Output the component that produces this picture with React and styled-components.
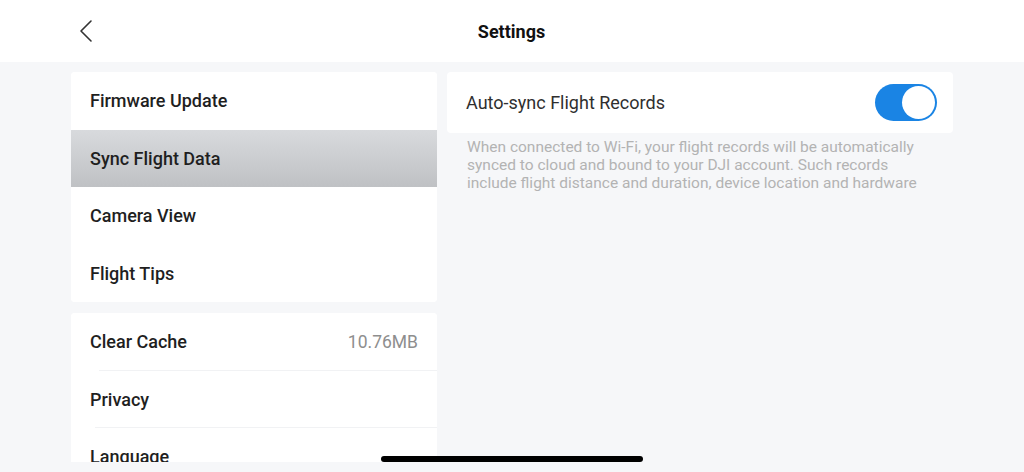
import React, { useState } from "react";
import styled, { createGlobalStyle } from "styled-components";

const GlobalStyle = createGlobalStyle`
  html, body {
    margin: 0;
    padding: 0;
    background: #f6f7f9;
    font-family: Roboto, "Liberation Sans", sans-serif;
    -webkit-font-smoothing: antialiased;
  }
`;

const Screen = styled.div`
  width: 1024px;
  height: 472px;
  display: flex;
  flex-direction: column;
  background: #f6f7f9;
  overflow: hidden;
  position: relative;
`;

const Header = styled.header`
  height: 62px;
  flex-shrink: 0;
  background: #ffffff;
  display: grid;
  grid-template-columns: 1fr auto 1fr;
  align-items: center;
  padding: 0 0 0 79px;
`;

const BackButton = styled.button`
  width: 22px;
  height: 30px;
  padding: 0;
  border: none;
  background: transparent;
  display: flex;
  align-items: center;
  cursor: pointer;
`;

const Title = styled.h1`
  margin: 0;
  font-size: 18px;
  font-weight: 700;
  color: #111;
  transform: translateX(-40px);
`;

const Body = styled.main`
  flex: 1;
  min-height: 0;
  display: flex;
  gap: 10px;
  padding: 10px 0 10px 71px;
`;

const LeftColumn = styled.div`
  width: 366px;
  display: flex;
  flex-direction: column;
  gap: 11px;
  overflow: hidden;
`;

const Card = styled.div`
  background: #ffffff;
  border-radius: 4px;
  overflow: hidden;
  flex-shrink: 0;
`;

const MenuRow = styled.div`
  height: 57.5px;
  display: flex;
  align-items: center;
  justify-content: space-between;
  padding: 0 19px;
  font-size: 18px;
  font-weight: 500;
  color: #1f1f1f;
  position: relative;
  background: ${(p) =>
    p.$active ? "linear-gradient(180deg, #d8dadd 0%, #bfc1c4 100%)" : "#ffffff"};

  ${(p) =>
    p.$divider &&
    `
    &::after {
      content: "";
      position: absolute;
      left: ${p.$divider}px;
      right: 0;
      bottom: 0;
      height: 1px;
      background: #f1f2f4;
    }
  `}
`;

const RowValue = styled.span`
  font-size: 17.5px;
  font-weight: 400;
  color: #8e8e8e;
`;

const RightColumn = styled.div`
  width: 506px;
  display: flex;
  flex-direction: column;
`;

const SettingCard = styled.div`
  height: 61px;
  background: #ffffff;
  border-radius: 4px;
  display: flex;
  align-items: center;
  justify-content: space-between;
  padding: 0 16px 0 19px;
`;

const SettingLabel = styled.span`
  font-size: 18px;
  font-weight: 400;
  color: #2f2f2f;
`;

const Toggle = styled.button`
  width: 62px;
  height: 37px;
  border-radius: 19px;
  border: none;
  padding: 2px;
  background: ${(p) => (p.$on ? "#1a84e4" : "#d0d2d6")};
  display: flex;
  justify-content: ${(p) => (p.$on ? "flex-end" : "flex-start")};
  align-items: center;
  cursor: pointer;
`;

const Knob = styled.span`
  width: 33px;
  height: 33px;
  border-radius: 50%;
  background: #ffffff;
`;

const Description = styled.p`
  margin: 5px 0 0;
  padding: 0 20px;
  font-size: 15.5px;
  line-height: 18px;
  color: #b3b3b3;
`;

const HomeIndicator = styled.div`
  position: absolute;
  left: 381px;
  bottom: 10px;
  width: 262px;
  height: 6px;
  border-radius: 3px;
  background: #000;
`;

const ChevronLeft = () => (
  <svg width="14" height="24" viewBox="0 0 14 24" fill="none">
    <path d="M12 2 L2 12 L12 22" stroke="#333" strokeWidth="1.6" strokeLinecap="round" strokeLinejoin="round" />
  </svg>
);

const primaryItems = ["Firmware Update", "Sync Flight Data", "Camera View", "Flight Tips"];

export default function App() {
  const [selected, setSelected] = useState("Sync Flight Data");
  const [autoSync, setAutoSync] = useState(true);

  return (
    <Screen>
      <GlobalStyle />
      <Header>
        <BackButton aria-label="Back">
          <ChevronLeft />
        </BackButton>
        <Title>Settings</Title>
        <span />
      </Header>
      <Body>
        <LeftColumn>
          <Card>
            {primaryItems.map((item) => (
              <MenuRow key={item} $active={selected === item} onClick={() => setSelected(item)}>
                {item}
              </MenuRow>
            ))}
          </Card>
          <Card>
            <MenuRow $divider={28}>
              Clear Cache
              <RowValue>10.76MB</RowValue>
            </MenuRow>
            <MenuRow $divider={24}>Privacy</MenuRow>
            <MenuRow>Language</MenuRow>
          </Card>
        </LeftColumn>
        <RightColumn>
          <SettingCard>
            <SettingLabel>Auto-sync Flight Records</SettingLabel>
            <Toggle $on={autoSync} onClick={() => setAutoSync(!autoSync)} aria-label="Auto-sync">
              <Knob />
            </Toggle>
          </SettingCard>
          <Description>
            When connected to Wi-Fi, your flight records will be automatically synced to cloud and
            bound to your DJI account. Such records include flight distance and duration, device
            location and hardware
          </Description>
        </RightColumn>
      </Body>
      <HomeIndicator />
    </Screen>
  );
}
